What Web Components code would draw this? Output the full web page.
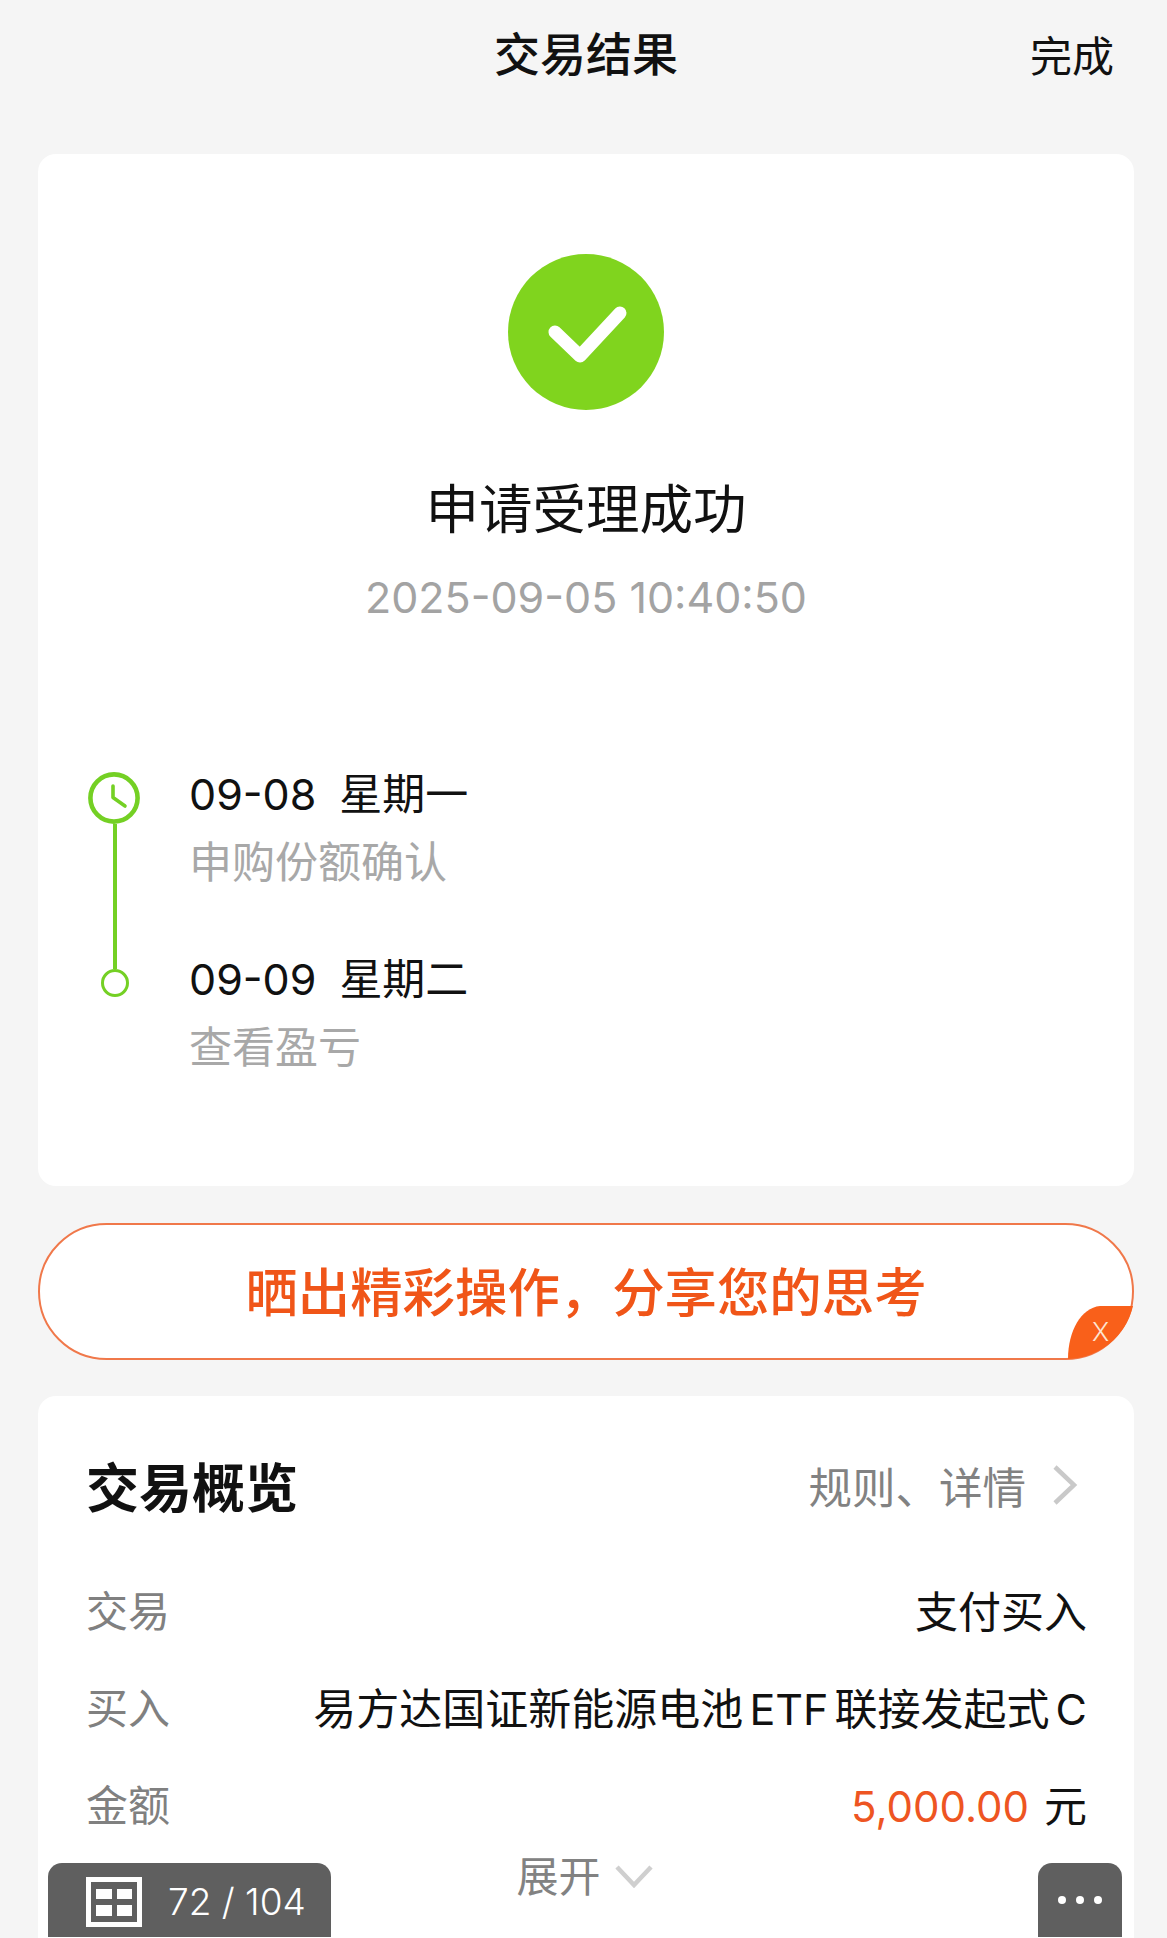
<!DOCTYPE html>
<html lang="zh-CN">
<head>
<meta charset="utf-8">
<title>交易结果</title>
<style>
  html, body { margin: 0; padding: 0; background: #f5f5f5; }
  body { font-family: Inter, "Noto Sans CJK SC", sans-serif; }
</style>
</head>
<body>
<result-page>
  <nav-bar>交易结果<span slot="action">完成</span></nav-bar>

  <result-card>
    <span slot="title">申请受理成功</span>
    <span slot="time">2025-09-05 10:40:50</span>
    <timeline-step icon="clock">
      <span slot="date">09-08</span><span slot="day">星期一</span>
      <span slot="note">申购份额确认</span>
    </timeline-step>
    <timeline-step icon="dot">
      <span slot="date">09-09</span><span slot="day">星期二</span>
      <span slot="note">查看盈亏</span>
    </timeline-step>
  </result-card>

  <share-banner>晒出精彩操作，分享您的思考</share-banner>

  <overview-card>
    <span slot="title">交易概览</span>
    <span slot="link">规则、详情</span>
    <info-row>
      <span slot="label">交易</span>支付买入
    </info-row>
    <info-row>
      <span slot="label">买入</span>易方达国证新能源电池 ETF 联接发起式 C
    </info-row>
    <info-row>
      <span slot="label">金额</span><money-value>5,000.00</money-value>元
    </info-row>
  </overview-card>

  <page-pager slot="overlay">72 / 104</page-pager>
  <more-button slot="overlay"></more-button>
</result-page>

<script>
(function () {
  "use strict";

  var FONT = 'Inter, "Noto Sans CJK SC", sans-serif';

  function define(name, html) {
    customElements.define(name, class extends HTMLElement {
      constructor() {
        super();
        this.attachShadow({ mode: "open" }).innerHTML = html;
      }
    });
  }

  define("result-page", `
    <style>
      :host { display: block; position: relative; width: 1167px; height: 1938px; overflow: hidden;
              background: #f5f5f5; font-family: ${FONT}; color: #111; }
      .flow { padding: 0 33px 0 38px; }
    </style>
    <div class="flow"><slot></slot></div>
    <slot name="overlay"></slot>`);

  define("nav-bar", `
    <style>
      :host { display: flex; justify-content: center; align-items: center; position: relative;
              height: 102px; margin-bottom: 52px; font-size: 46px; font-weight: 500; }
      .action { position: absolute; right: 20px; top: 33px; line-height: 48px; font-size: 42px; font-weight: 400; }
    </style>
    <slot></slot>
    <div class="action"><slot name="action"></slot></div>`);

  define("result-card", `
    <style>
      :host { display: block; background: #fff; border-radius: 18px; padding: 100px 50px 48px; }
      .head { display: flex; flex-direction: column; align-items: center; }
      svg { display: block; width: 156px; height: 156px; }
      .title { margin-top: 70px; line-height: 60px; font-size: 53.500px; font-weight: 400; }
      .time { margin-top: 32px; line-height: 50px; font-size: 43px; color: #a3a3a3; }
      .steps { margin-top: 142px; }
    </style>
    <div class="head">
      <svg viewBox="0 0 156 156">
        <circle cx="78" cy="78" r="78" fill="#80d41e"/>
        <path d="M47 78 72 102 112 59" fill="none" stroke="#fff" stroke-width="13" stroke-linecap="round" stroke-linejoin="round"/>
      </svg>
      <div class="title"><slot name="title"></slot></div>
      <div class="time"><slot name="time"></slot></div>
    </div>
    <div class="steps"><slot></slot></div>`);

  customElements.define("timeline-step", class extends HTMLElement {
    constructor() {
      super();
      var clock = this.getAttribute("icon") === "clock";
      var rail = clock
        ? `<svg class="clock" viewBox="0 0 52 52">
             <circle cx="26" cy="26" r="23.6" fill="none" stroke="#74d024" stroke-width="4.6"/>
             <path d="M25 14V25.500L37 34" fill="none" stroke="#74d024" stroke-width="3.600" stroke-linecap="round" stroke-linejoin="round"/>
           </svg><div class="line"></div>`
        : `<div class="line short"></div><div class="dot"></div>`;
      this.attachShadow({ mode: "open" }).innerHTML = `
        <style>
          :host { display: grid; grid-template-columns: 52px 1fr; column-gap: 49px; height: 185px; }
          :host([icon="dot"]) { height: 189px; }
          .rail { display: flex; flex-direction: column; align-items: center; }
          .clock { display: block; width: 52px; height: 52px; margin-top: 8px; flex: none; }
          .line { flex: 1; width: 4px; background: #74d024; margin-left: 2px; }
          .line.short { flex: none; height: 20px; }
          .dot { width: 28px; height: 28px; box-sizing: border-box; border: 3.500px solid #74d024; border-radius: 50%; margin-left: 2px; }
          .top { display: flex; gap: 23px; margin-top: 1px; line-height: 58px; font-size: 43px; }
          .note { margin-top: 9px; line-height: 60px; font-size: 43px; color: #a8a8a8; }
        </style>
        <div class="rail">${rail}</div>
        <div>
          <div class="top"><slot name="date"></slot><slot name="day"></slot></div>
          <div class="note"><slot name="note"></slot></div>
        </div>`;
    }
  });

  define("share-banner", `
    <style>
      :host { display: flex; justify-content: center; align-items: center; position: relative; box-sizing: border-box;
              height: 137px; margin-top: 37px; padding-bottom: 5px; background: #fff; border: 2px solid #f0784a; border-radius: 69px;
              font-size: 52.400px; font-weight: 500; color: #f05518; }
      .close { position: absolute; right: -2px; bottom: -1px; width: 68px; height: 53px; }
      svg { display: block; width: 68px; height: 53px; }
      .x { position: absolute; left: 26px; top: 10px; line-height: 32px; font-size: 26px; font-weight: 300; color: #fde4d2; }
    </style>
    <slot></slot>
    <div class="close">
      <svg viewBox="0 0 68 53"><path d="M2 53A68.500 68.500 0 0 0 67 0H34C15 2 2 25 2 53Z" fill="#f9601a"/></svg>
      <span class="x">X</span>
    </div>`);

  define("overview-card", `
    <style>
      :host { display: block; margin-top: 36px; background: #fff; border-radius: 18px; padding: 59px 47px 120px 48px; }
      .head { display: flex; align-items: center; justify-content: space-between; height: 60px; margin-bottom: 45px; }
      .title { font-size: 53px; font-weight: 700; }
      .link { display: flex; align-items: center; gap: 25px; margin-right: 9px; font-size: 43.500px; color: #828282; }
      svg { display: block; flex: none; }
      .more { display: flex; justify-content: center; align-items: center; gap: 14px; height: 44px; padding-right: 4px; font-size: 42px; color: #828282; }
      .more svg { margin-top: 6px; }
    </style>
    <div class="head">
      <div class="title"><slot name="title"></slot></div>
      <div class="link"><slot name="link"></slot>
        <svg width="27" height="42" viewBox="0 0 27 42"><path d="M4 3 23 21 4 39" fill="none" stroke="#c9c9c9" stroke-width="4.500"/></svg>
      </div>
    </div>
    <slot></slot>
    <div class="more">展开
      <svg width="38" height="24" viewBox="0 0 38 24"><path d="M2 3 19 21 36 3" fill="none" stroke="#cfcfcf" stroke-width="4.500"/></svg>
    </div>`);

  define("info-row", `
    <style>
      :host { display: flex; justify-content: space-between; align-items: center; height: 97px; font-size: 43px; }
      .label { color: #808080; font-size: 42px; }
      .value { white-space: nowrap; word-spacing: -6px; }
    </style>
    <div class="label"><slot name="label"></slot></div>
    <div class="value"><slot></slot></div>`);

  define("money-value", `
    <style>:host { display: inline-block; margin-right: 15px; font-size: 42px; color: #ee5522; }</style>
    <slot></slot>`);

  define("page-pager", `
    <style>
      :host { display: flex; align-items: center; gap: 26px; position: absolute; left: 48px; bottom: 1px; box-sizing: border-box;
              width: 283px; height: 74px; padding: 3px 0 0 38px; background: #5f5f5f; border-radius: 14px 14px 0 0;
              font-size: 37px; font-weight: 300; color: #fff; white-space: nowrap; }
      svg { display: block; flex: none; }
    </style>
    <svg width="56" height="50" viewBox="0 0 56 50">
      <rect x="2.500" y="2.500" width="51" height="45" fill="none" stroke="#fff" stroke-width="5"/>
      <path d="M10 12H26V22H10ZM31 12H46V22H31ZM10 28H26V39H10ZM31 28H46V39H31Z" fill="#fff"/>
    </svg>
    <span><slot></slot></span>`);

  define("more-button", `
    <style>
      :host { display: flex; justify-content: center; align-items: center; gap: 10px; position: absolute; left: 1038px; bottom: 1px;
              width: 84px; height: 74px; background: #5f5f5f; border-radius: 14px 14px 0 0; }
      i { display: block; width: 8px; height: 8px; border-radius: 50%; background: #fff; }
    </style>
    <i></i><i></i><i></i>`);
}());
</script>
</body>
</html>
